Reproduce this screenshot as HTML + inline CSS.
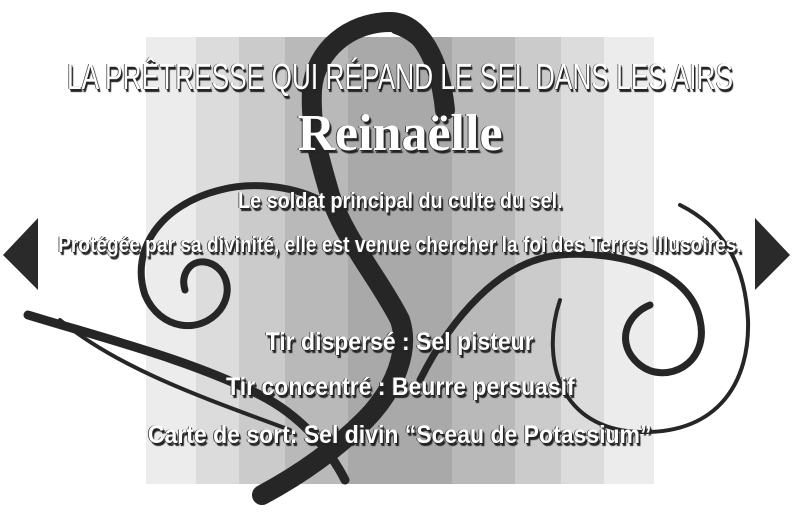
<!DOCTYPE html>
<html><head><meta charset="utf-8"><style>
body{margin:0;width:800px;height:512px;background:#fff;position:relative;overflow:hidden}
.s{position:absolute;top:37px;height:447px}
.t{position:absolute;left:0;width:800px;text-align:center;white-space:nowrap;color:#fff;font-family:"Liberation Sans",sans-serif;font-weight:bold;text-shadow:2px 3px 1px #222,1px 1px 0 #333,-1px 0 0 #444}
.t span{display:inline-block}
</style></head><body>
<div class="s" style="left:146px;width:50px;background:#ececec"></div>
<div class="s" style="left:196px;width:43px;background:#dcdcdc"></div>
<div class="s" style="left:239px;width:46px;background:#cbcbcb"></div>
<div class="s" style="left:285px;width:63px;background:#b9b9b9"></div>
<div class="s" style="left:348px;width:104px;background:#a9a9a9"></div>
<div class="s" style="left:452px;width:63px;background:#b9b9b9"></div>
<div class="s" style="left:515px;width:46px;background:#cbcbcb"></div>
<div class="s" style="left:561px;width:43px;background:#dcdcdc"></div>
<div class="s" style="left:604px;width:50px;background:#ececec"></div>
<svg style="position:absolute;left:0;top:0" width="800" height="512">
<g fill="none" stroke="#262626" stroke-linecap="round">
<path d="M445 110 C440 60 420 22 390 22 C350 22 315 50 312 90 C310 130 320 160 330 195 C345 240 380 280 400 320 C410 350 395 390 365 420 C330 455 290 480 262 495" stroke-width="20"/>
<path d="M445 110 C440 70 425 40 395 30" stroke-width="8"/>
<path d="M320 200 C290 185 250 182 220 190 C160 205 130 250 145 295 C160 330 200 335 220 310 C235 290 225 265 205 262 C190 260 180 275 185 290" stroke-width="7"/>
<path d="M28 315 C110 340 190 360 260 395 C300 415 330 450 345 480" stroke-width="9"/>
<path d="M60 320 C120 370 210 400 290 430" stroke-width="4"/>
<path d="M420 380 C450 320 500 260 560 255 C620 250 690 270 700 320 C710 365 665 385 640 365 C615 345 625 315 650 305" stroke-width="7"/>
<path d="M560 300 C540 360 560 430 640 432 C720 434 750 380 748 320 C745 260 720 225 680 205" stroke-width="4"/>
</g>
<polygon points="38,218 3,255 38,290" fill="#2a2a2a"/>
<polygon points="755,218 790,255 755,290" fill="#2a2a2a"/>
</svg>
<div style="position:absolute;left:400px;top:56px;white-space:nowrap;transform:translateX(-50%) scaleX(0.73);color:#fff;font-family:'Liberation Sans',sans-serif;font-size:36px;text-shadow:2px 3px 1px #222,1px 1px 0 #333,-1px 0 0 #444">LA PRÊTRESSE QUI RÉPAND LE SEL DANS LES AIRS</div>
<div class="t" style="top:104px;font-size:52px;font-family:'Liberation Serif',serif">Reinaëlle</div>
<div class="t" style="top:188px;font-size:22px"><span style="transform:scaleX(0.9)">Le soldat principal du culte du sel.</span></div>
<div class="t" style="top:232px;font-size:22px"><span style="transform:scaleX(0.87)">Protégée par sa divinité, elle est venue chercher la foi des Terres Illusoires.</span></div>
<div class="t" style="top:328px;font-size:25px"><span style="transform:scaleX(0.92)">Tir dispersé : Sel pisteur</span></div>
<div class="t" style="top:373px;font-size:25px"><span style="transform:scaleX(0.92)">Tir concentré : Beurre persuasif</span></div>
<div class="t" style="top:421px;font-size:25px"><span style="transform:scaleX(0.92)">Carte de sort: Sel divin “Sceau de Potassium”</span></div>
</body></html>
